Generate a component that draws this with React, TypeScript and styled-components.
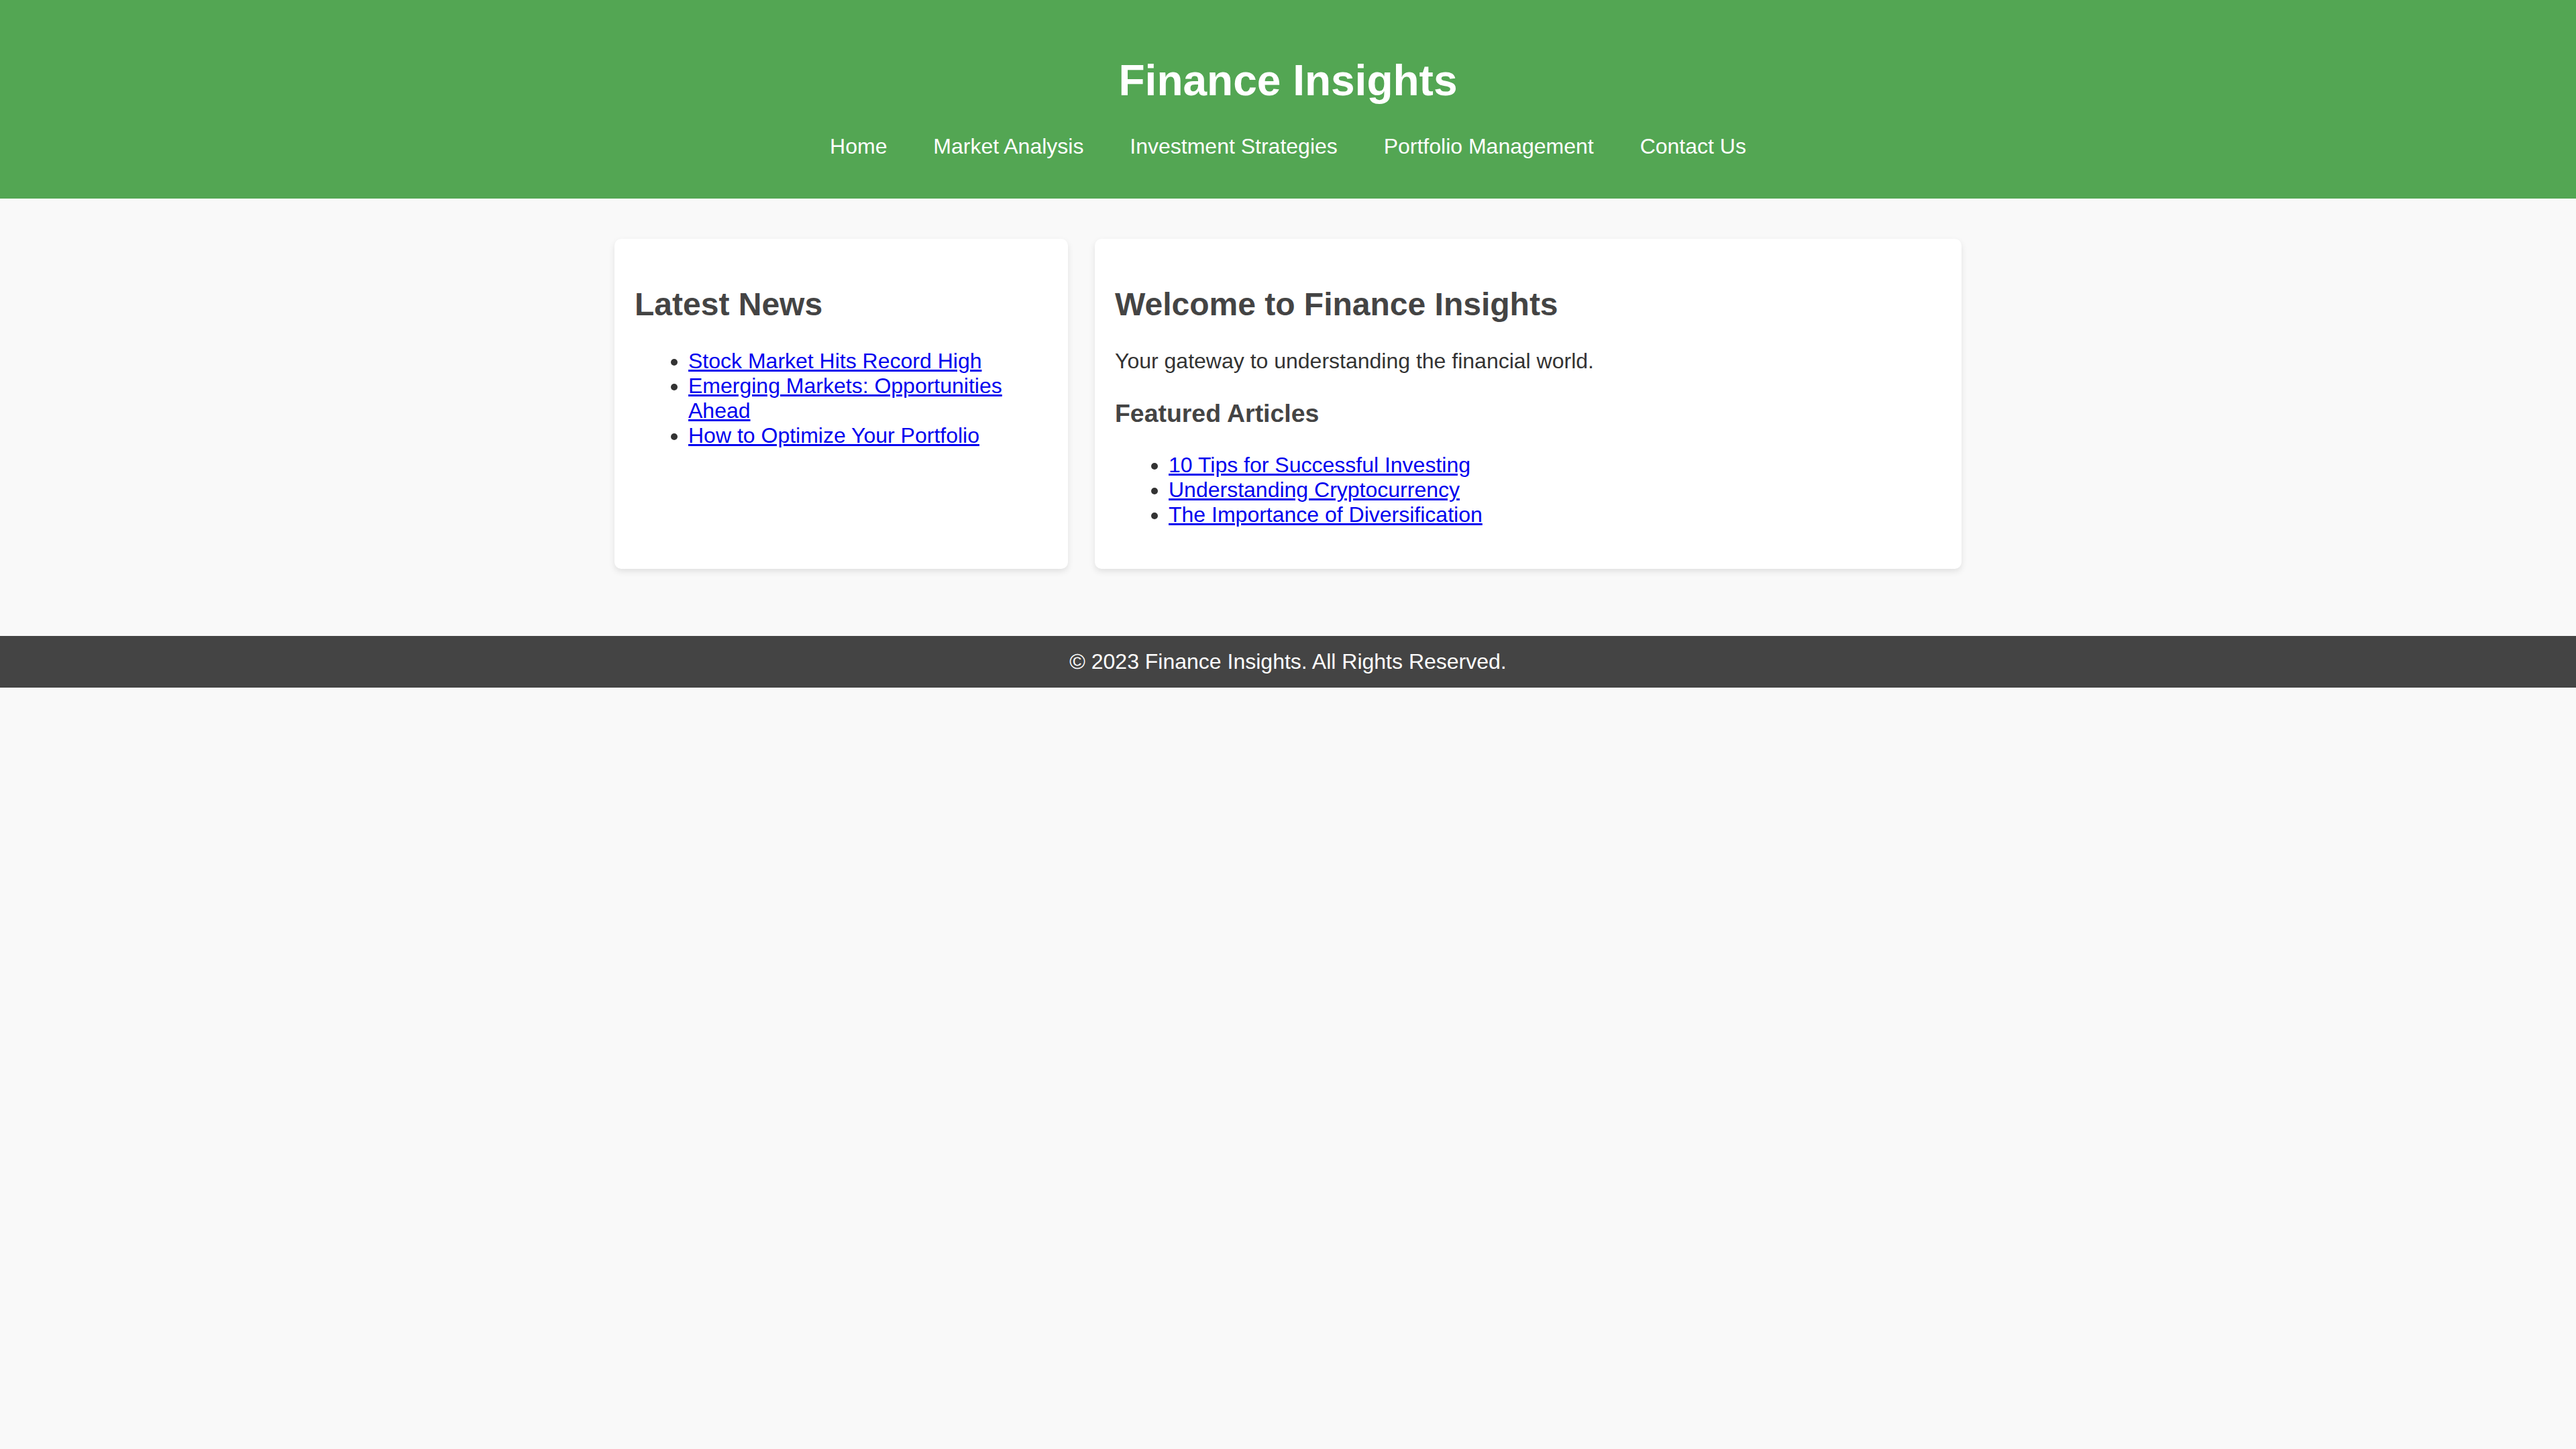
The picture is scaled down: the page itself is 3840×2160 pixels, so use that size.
import React from "react";
import styled, { createGlobalStyle } from "styled-components";

const GlobalStyle = createGlobalStyle`
  html, body {
    margin: 0;
    padding: 0;
  }
  body {
    background: #f9f9f9;
    color: #333;
    font-family: "Liberation Sans", Arial, Helvetica, sans-serif;
    font-size: 32px;
    line-height: normal;
  }
`;

const Header = styled.header`
  background: #53a653;
  color: #fff;
  text-align: center;
  padding: 40px 0 59px;
`;

const SiteTitle = styled.h1`
  margin: 42.88px 0;
  font-size: 64px;
  font-weight: bold;
  line-height: normal;
`;

const Nav = styled.nav`
  display: flex;
  justify-content: center;
  gap: 68.9px;
`;

const NavLink = styled.a`
  color: #fff;
  text-decoration: none;
  font-size: 32px;
`;

const Main = styled.main`
  display: flex;
  align-items: stretch;
  gap: 40px;
  width: 2008px;
  margin: 60px auto 100px;
`;

const Card = styled.section<{ $grow: number }>`
  box-sizing: content-box;
  flex: ${(p) => p.$grow} 1 0;
  min-width: 0;
  display: flow-root;
  background: #fff;
  padding: 30px;
  border-radius: 10px;
  box-shadow: 0 4px 10px rgba(0, 0, 0, 0.1);
`;

const CardTitle = styled.h2`
  margin: 39.84px 0;
  font-size: 48px;
  font-weight: bold;
  color: #444;
`;

const SubTitle = styled.h3`
  margin: 37.44px 0;
  font-size: 37.44px;
  font-weight: bold;
  color: #444;
`;

const Text = styled.p`
  margin: 32px 0;
`;

const LinkList = styled.ul`
  margin: 32px 0;
  padding-left: 80px;
  list-style: disc;
`;

const Item = styled.li``;

const ArticleLink = styled.a`
  color: #0000ee;
  text-decoration: underline;
`;

const Footer = styled.footer`
  background: #444;
  color: #fff;
  text-align: center;
  padding: 20px 0;
  font-size: 32px;
`;

const navItems = [
  "Home",
  "Market Analysis",
  "Investment Strategies",
  "Portfolio Management",
  "Contact Us",
];

const news = [
  "Stock Market Hits Record High",
  "Emerging Markets: Opportunities Ahead",
  "How to Optimize Your Portfolio",
];

const featured = [
  "10 Tips for Successful Investing",
  "Understanding Cryptocurrency",
  "The Importance of Diversification",
];

export default function App() {
  return (
    <>
      <GlobalStyle />
      <Header>
        <SiteTitle>Finance Insights</SiteTitle>
        <Nav>
          {navItems.map((n) => (
            <NavLink key={n} href="#">
              {n}
            </NavLink>
          ))}
        </Nav>
      </Header>
      <Main>
        <Card $grow={1}>
          <CardTitle>Latest News</CardTitle>
          <LinkList>
            {news.map((n) => (
              <Item key={n}>
                <ArticleLink href="#">{n}</ArticleLink>
              </Item>
            ))}
          </LinkList>
        </Card>
        <Card $grow={2}>
          <CardTitle>Welcome to Finance Insights</CardTitle>
          <Text>Your gateway to understanding the financial world.</Text>
          <SubTitle>Featured Articles</SubTitle>
          <LinkList>
            {featured.map((n) => (
              <Item key={n}>
                <ArticleLink href="#">{n}</ArticleLink>
              </Item>
            ))}
          </LinkList>
        </Card>
      </Main>
      <Footer>© 2023 Finance Insights. All Rights Reserved.</Footer>
    </>
  );
}
